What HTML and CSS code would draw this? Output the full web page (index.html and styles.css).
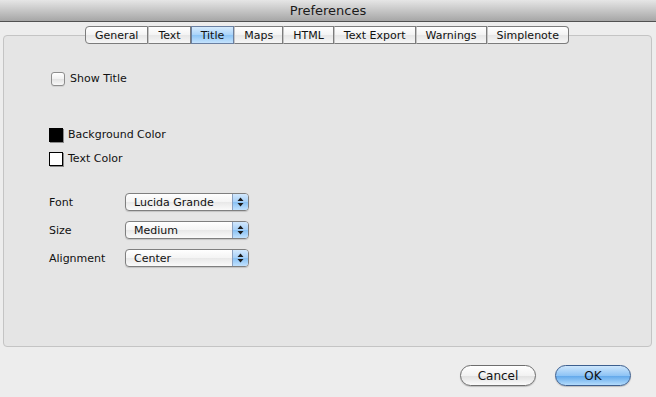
FILE: index.html
```html
<!DOCTYPE html>
<html lang="en">
<head>
    <meta charset="UTF-8">
    <title>Preferences</title>
    <link rel="stylesheet" href="styles.css">
</head>
<body>
    <div class="window">
        <header class="titlebar">Preferences</header>

        <div class="content">
            <nav class="tabs">
                <span class="tab">General</span>
                <span class="tab">Text</span>
                <span class="tab active">Title</span>
                <span class="tab">Maps</span>
                <span class="tab">HTML</span>
                <span class="tab">Text Export</span>
                <span class="tab">Warnings</span>
                <span class="tab">Simplenote</span>
            </nav>

            <div class="group">
                <label class="check-row">
                    <span class="checkbox"></span>
                    Show Title
                </label>

                <div class="swatch-row first">
                    <span class="swatch black"></span>
                    Background Color
                </div>
                <div class="swatch-row">
                    <span class="swatch white"></span>
                    Text Color
                </div>

                <div class="form">
                    <span class="label">Font</span>
                    <div class="popup">
                        <span class="value">Lucida Grande</span>
                        <span class="arrows"><svg width="7" height="10" viewBox="0 0 7 10"><path d="M3.5 0.5 L6.5 4 H0.5 Z M3.5 9.5 L6.5 6 H0.5 Z" fill="#1b1b1b"/></svg></span>
                    </div>
                    <span class="label">Size</span>
                    <div class="popup">
                        <span class="value">Medium</span>
                        <span class="arrows"><svg width="7" height="10" viewBox="0 0 7 10"><path d="M3.5 0.5 L6.5 4 H0.5 Z M3.5 9.5 L6.5 6 H0.5 Z" fill="#1b1b1b"/></svg></span>
                    </div>
                    <span class="label">Alignment</span>
                    <div class="popup">
                        <span class="value">Center</span>
                        <span class="arrows"><svg width="7" height="10" viewBox="0 0 7 10"><path d="M3.5 0.5 L6.5 4 H0.5 Z M3.5 9.5 L6.5 6 H0.5 Z" fill="#1b1b1b"/></svg></span>
                    </div>
                </div>
            </div>
        </div>

        <footer class="buttons">
            <button class="btn">Cancel</button>
            <button class="btn default">OK</button>
        </footer>
    </div>
</body>
</html>
```

FILE: styles.css
```css
* {
    box-sizing: border-box;
}
body {
    margin: 0;
    font-family: "DejaVu Sans", "Lucida Grande", sans-serif;
    font-size: 11px;
    color: #111;
    background-color: #ededed;
}
.window {
    width: 656px;
    height: 397px;
    background-color: #ededed;
}
.titlebar {
    height: 22px;
    line-height: 21px;
    text-align: center;
    font-size: 13px;
    color: #1a1a1a;
    background: linear-gradient(#e6e6e6, #c6c6c6 50%, #a6a6a6);
    border-bottom: 1px solid #515151;
}
.content {
    padding: 4px 4px 0 3px;
}
.tabs {
    display: flex;
    justify-content: center;
    position: relative;
    z-index: 1;
    margin-bottom: -9px;
    padding-right: 1px;
}
.tab {
    height: 18px;
    line-height: 17px;
    padding: 0 9px;
    background: linear-gradient(#ffffff, #f3f3f3 50%, #e6e6e6 51%, #f6f6f6);
    border: 1px solid #7c7c7c;
    border-left: 1px solid #c4c4c4;
}
.tab:first-child {
    border-left: 1px solid #7c7c7c;
    border-radius: 4px 0 0 4px;
}
.tab:last-child {
    border-radius: 0 4px 4px 0;
}
.tab.active {
    background: linear-gradient(#d6ebfd, #a9d3f9 50%, #8cc4f5 51%, #c5e3fd);
    border-color: #6a7fa0;
}
.group {
    height: 312px;
    background-color: #e5e5e5;
    border: 1px solid #c4c4c4;
    border-radius: 4px;
    padding-top: 33px;
}
.check-row {
    display: flex;
    align-items: center;
    gap: 5px;
    height: 18px;
    padding-left: 47px;
    padding-top: 1px;
}
.checkbox {
    width: 14px;
    height: 14px;
    border: 1px solid #8d8d8d;
    border-radius: 3px;
    background: linear-gradient(#ffffff, #f0f0f0 50%, #e2e2e2 51%, #f8f8f8);
    box-shadow: 0 1px 0 rgba(0, 0, 0, 0.08);
}
.swatch-row {
    display: flex;
    align-items: center;
    gap: 5px;
    height: 18px;
    padding-left: 45px;
    padding-top: 1px;
    margin-top: 6px;
}
.swatch-row.first {
    margin-top: 38px;
}
.swatch {
    width: 14px;
    height: 14px;
    border: 1px solid #000;
    box-shadow: 1px 1px 0 #8a8a8a;
}
.swatch.black {
    background-color: #000;
}
.swatch.white {
    background-color: #fff;
}
.form {
    display: grid;
    grid-template-columns: 76px 124px;
    row-gap: 10px;
    align-items: center;
    padding-left: 45px;
    margin-top: 26px;
}
.label {
    padding-top: 1px;
}
.popup {
    display: flex;
    height: 18px;
    border: 1px solid #7f7f7f;
    border-radius: 4px;
    overflow: hidden;
    background: linear-gradient(#ffffff, #f4f4f4 50%, #e8e8e8 51%, #fafafa);
    box-shadow: 0 1px 1px rgba(0, 0, 0, 0.15);
}
.popup .value {
    flex: 1;
    line-height: 17px;
    padding-left: 8px;
}
.popup .arrows {
    display: flex;
    align-items: center;
    justify-content: center;
    width: 16px;
    border-left: 1px solid #8aa0c0;
    background: linear-gradient(#d2e8fd, #a6d0f8 50%, #88c1f4 51%, #c1e1fd);
}
.buttons {
    display: flex;
    justify-content: flex-end;
    gap: 19px;
    padding: 18px 25px 0 0;
}
.btn {
    width: 76px;
    height: 21px;
    padding: 0;
    font-family: inherit;
    font-size: 12px;
    color: #111;
    border: 1px solid #6e6e6e;
    border-radius: 11px;
    background: linear-gradient(#ffffff, #f2f2f2 50%, #e0e0e0 51%, #fbfbfb);
    box-shadow: 0 1px 1px rgba(0, 0, 0, 0.2);
}
.btn.default {
    border-color: #3d5f8f;
    background: linear-gradient(#cde6fc, #8fc4f5 50%, #5ea6ea 51%, #b4dcfc);
}
```
